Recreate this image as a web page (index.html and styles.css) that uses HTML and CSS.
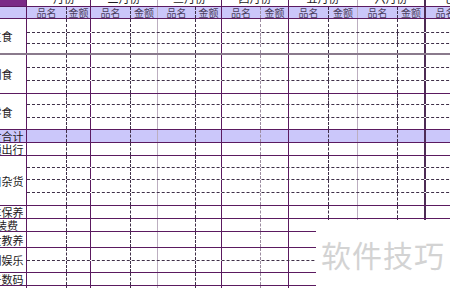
FILE: index.html
```html
<!DOCTYPE html>
<html lang="zh-CN">
<head>
<meta charset="utf-8">
<title>月度支出表</title>
<link rel="stylesheet" href="styles.css">
</head>
<body>
<div class="sheet">
  <div class="grp top">
    <div class="lab corner"></div>
    <div class="mrow">
      <span>一月份</span><span>二月份</span><span>三月份</span><span>四月份</span><span>五月份</span><span>六月份</span><span>七月份</span>
    </div>
  </div>
  <div class="grp head">
    <div class="lab"></div>
    <div class="rows">
      <div class="row h11"><span>品名</span><span>金额</span><span>品名</span><span>金额</span><span>品名</span><span>金额</span><span>品名</span><span>金额</span><span>品名</span><span>金额</span><span>品名</span><span>金额</span><span>品名</span><span>金额</span></div>
    </div>
  </div>
  <div class="grp thick">
    <div class="lab">主食</div>
    <div class="rows">
      <div class="row d h14"><span></span><span></span><span></span><span></span><span></span><span></span><span></span><span></span><span></span><span></span><span></span><span></span><span></span><span></span></div>
      <div class="row d h11"><span></span><span></span><span></span><span></span><span></span><span></span><span></span><span></span><span></span><span></span><span></span><span></span><span></span><span></span></div>
      <div class="row h9"><span></span><span></span><span></span><span></span><span></span><span></span><span></span><span></span><span></span><span></span><span></span><span></span><span></span><span></span></div>
    </div>
  </div>
  <div class="grp">
    <div class="lab">副食</div>
    <div class="rows">
      <div class="row d h13"><span></span><span></span><span></span><span></span><span></span><span></span><span></span><span></span><span></span><span></span><span></span><span></span><span></span><span></span></div>
      <div class="row d h13"><span></span><span></span><span></span><span></span><span></span><span></span><span></span><span></span><span></span><span></span><span></span><span></span><span></span><span></span></div>
      <div class="row h12"><span></span><span></span><span></span><span></span><span></span><span></span><span></span><span></span><span></span><span></span><span></span><span></span><span></span><span></span></div>
    </div>
  </div>
  <div class="grp">
    <div class="lab">零食</div>
    <div class="rows">
      <div class="row d h11"><span></span><span></span><span></span><span></span><span></span><span></span><span></span><span></span><span></span><span></span><span></span><span></span><span></span><span></span></div>
      <div class="row d h13"><span></span><span></span><span></span><span></span><span></span><span></span><span></span><span></span><span></span><span></span><span></span><span></span><span></span><span></span></div>
      <div class="row h11"><span></span><span></span><span></span><span></span><span></span><span></span><span></span><span></span><span></span><span></span><span></span><span></span><span></span><span></span></div>
    </div>
  </div>
  <div class="grp tot">
    <div class="lab">饮食合计</div>
    <div class="rows">
      <div class="row h12"><span></span><span></span><span></span><span></span><span></span><span></span><span></span><span></span><span></span><span></span><span></span><span></span><span></span><span></span></div>
    </div>
  </div>
  <div class="grp">
    <div class="lab">交通出行</div>
    <div class="rows">
      <div class="row h12"><span></span><span></span><span></span><span></span><span></span><span></span><span></span><span></span><span></span><span></span><span></span><span></span><span></span><span></span></div>
    </div>
  </div>
  <div class="grp">
    <div class="lab">日用杂货</div>
    <div class="rows">
      <div class="row d h12"><span></span><span></span><span></span><span></span><span></span><span></span><span></span><span></span><span></span><span></span><span></span><span></span><span></span><span></span></div>
      <div class="row d h12"><span></span><span></span><span></span><span></span><span></span><span></span><span></span><span></span><span></span><span></span><span></span><span></span><span></span><span></span></div>
      <div class="row d h13"><span></span><span></span><span></span><span></span><span></span><span></span><span></span><span></span><span></span><span></span><span></span><span></span><span></span><span></span></div>
      <div class="row h12"><span></span><span></span><span></span><span></span><span></span><span></span><span></span><span></span><span></span><span></span><span></span><span></span><span></span><span></span></div>
    </div>
  </div>
  <div class="grp">
    <div class="lab">汽车保养</div>
    <div class="rows">
      <div class="row h12"><span></span><span></span><span></span><span></span><span></span><span></span><span></span><span></span><span></span><span></span><span></span><span></span><span></span><span></span></div>
    </div>
  </div>
  <div class="grp">
    <div class="lab">服装费</div>
    <div class="rows">
      <div class="row h12"><span></span><span></span><span></span><span></span><span></span><span></span><span></span><span></span><span></span><span></span><span></span><span></span><span></span><span></span></div>
    </div>
  </div>
  <div class="grp">
    <div class="lab">子女教养</div>
    <div class="rows">
      <div class="row h15"><span></span><span></span><span></span><span></span><span></span><span></span><span></span><span></span><span></span><span></span><span></span><span></span><span></span><span></span></div>
    </div>
  </div>
  <div class="grp">
    <div class="lab">休闲娱乐</div>
    <div class="rows">
      <div class="row d h13"><span></span><span></span><span></span><span></span><span></span><span></span><span></span><span></span><span></span><span></span><span></span><span></span><span></span><span></span></div>
      <div class="row h11"><span></span><span></span><span></span><span></span><span></span><span></span><span></span><span></span><span></span><span></span><span></span><span></span><span></span><span></span></div>
    </div>
  </div>
  <div class="grp">
    <div class="lab">电子数码</div>
    <div class="rows">
      <div class="row h12"><span></span><span></span><span></span><span></span><span></span><span></span><span></span><span></span><span></span><span></span><span></span><span></span><span></span><span></span></div>
    </div>
  </div>
  <div class="grp">
    <div class="lab">医疗保健</div>
    <div class="rows">
      <div class="row h14"><span></span><span></span><span></span><span></span><span></span><span></span><span></span><span></span><span></span><span></span><span></span><span></span><span></span><span></span></div>
    </div>
  </div>
</div>
<div class="wm">软件技巧</div>
</body>
</html>
```
FILE: styles.css
```css
html, body {
  margin: 0;
  padding: 0;
  background: #ffffff;
}
body {
  width: 450px;
  height: 288px;
  overflow: hidden;
  position: relative;
  font-family: "Noto Sans CJK SC", "Noto Sans", sans-serif;
  color: #1e1a22;
}
.sheet {
  margin: -7px 0 0 -23px;
  width: max-content;
}
.grp {
  display: flex;
  border-bottom: 1px solid #5b1a60;
}
.grp.thick {
  border-bottom: 2px solid #8a7a8c;
}
.grp.tot,
.grp.head {
  background: #cbc7fa;
}
.lab {
  flex: none;
  width: 50px;
  box-sizing: border-box;
  border-right: 1px solid #5b1a60;
  display: flex;
  align-items: center;
  justify-content: center;
  font-size: 11px;
  line-height: 12px;
  white-space: nowrap;
  overflow: hidden;
}
.lab.corner {
  background: #7a2a86;
  height: 13px;
}
.rows {
  display: flex;
  flex-direction: column;
}
.row {
  display: flex;
  box-sizing: border-box;
}
.row.d {
  border-bottom: 1px dashed #3f2f48;
}
.h9 { height: 9px; }
.h11 { height: 11px; }
.h12 { height: 12px; }
.h13 { height: 13px; }
.h14 { height: 14px; }
.h15 { height: 15px; }

.row > span {
  flex: none;
  box-sizing: border-box;
  border-right: 1px dashed #3f2f48;
}
.row > span:nth-child(1) { width: 40px; }
.row > span:nth-child(2) { width: 24px; border-right: 1px solid #5b1a60; }
.row > span:nth-child(3) { width: 40px; }
.row > span:nth-child(4) { width: 27px; border-right: 1px solid #bcaec0; }
.row > span:nth-child(5) { width: 38px; }
.row > span:nth-child(6) { width: 26px; border-right: 1px solid #5b1a60; }
.row > span:nth-child(7) { width: 39px; border-right: 1px dashed #9c8ca0; }
.row > span:nth-child(8) { width: 28px; border-right: 1px solid #5b1a60; }
.row > span:nth-child(9) { width: 40px; }
.row > span:nth-child(10) { width: 29px; border-right: 1px solid #bcaec0; }
.row > span:nth-child(11) { width: 40px; }
.row > span:nth-child(12) { width: 28px; border-right: 2px solid #4d2c55; }
.row > span:nth-child(13) { width: 40px; }
.row > span:nth-child(14) { width: 28px; border-right: 1px solid #5b1a60; }

.head .row > span {
  font-size: 10px;
  line-height: 11px;
  text-align: center;
  color: #4a3d5c;
  white-space: nowrap;
  overflow: hidden;
}

.mrow {
  display: flex;
  height: 13px;
}
.mrow > span {
  flex: none;
  box-sizing: border-box;
  border-right: 1px solid #5b1a60;
  font-size: 11px;
  line-height: 11px;
  text-align: center;
  white-space: nowrap;
  overflow: hidden;
  color: #1e1a22;
}
.mrow > span:nth-child(1) { width: 64px; }
.mrow > span:nth-child(2) { width: 67px; border-right-color: #bcaec0; }
.mrow > span:nth-child(3) { width: 64px; }
.mrow > span:nth-child(4) { width: 67px; }
.mrow > span:nth-child(5) { width: 69px; border-right-color: #bcaec0; }
.mrow > span:nth-child(6) { width: 68px; border-right: 2px solid #4d2c55; }
.mrow > span:nth-child(7) { width: 68px; }

.wm {
  position: absolute;
  left: 316px;
  top: 220px;
  width: 134px;
  height: 68px;
  background: #ffffff;
  box-sizing: border-box;
  padding: 18px 0 0 5px;
  font-size: 30px;
  line-height: 32px;
  letter-spacing: 1px;
  color: #d3d3d3;
  white-space: nowrap;
}
```
